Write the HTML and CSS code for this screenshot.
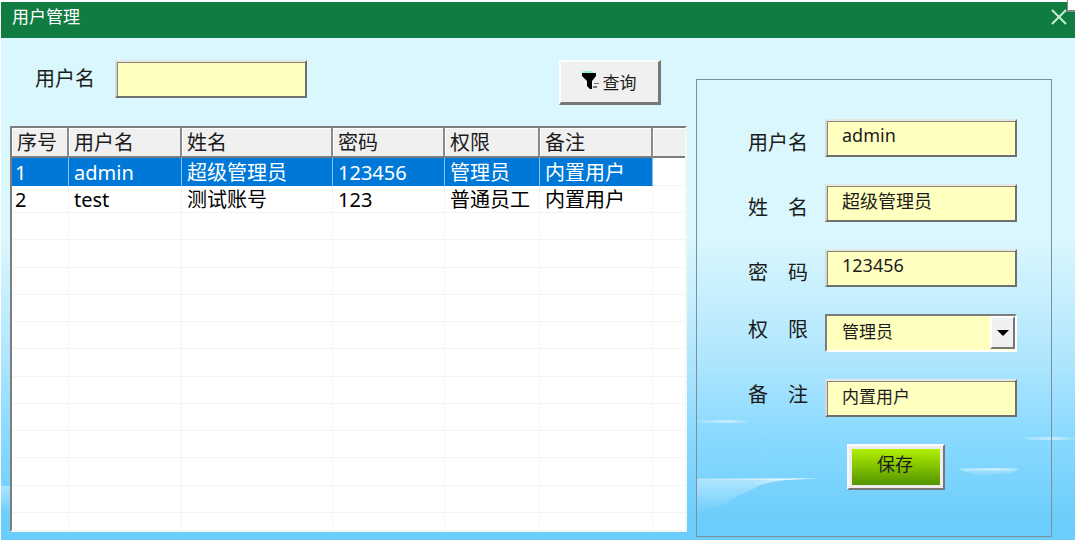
FILE: index.html
```html
<!DOCTYPE html>
<html lang="zh-CN">
<head>
    <meta charset="UTF-8">
    <meta name="viewport" content="width=device-width, initial-scale=1.0">
    <title>用户管理</title>
    <link rel="stylesheet" href="styles.css">
</head>
<body>

<div class="window">
    <svg class="clouds" viewBox="0 0 1074 500" preserveAspectRatio="none" aria-hidden="true">
        <defs>
            <linearGradient id="bank" x1="0" y1="0" x2="0" y2="1">
                <stop offset="0" stop-color="#fff" stop-opacity="0.4"/>
                <stop offset="1" stop-color="#fff" stop-opacity="0"/>
            </linearGradient>
            <linearGradient id="streak" x1="0" y1="0" x2="1" y2="0">
                <stop offset="0" stop-color="#fff" stop-opacity="0.1"/>
                <stop offset="0.6" stop-color="#fff" stop-opacity="0.5"/>
                <stop offset="1" stop-color="#fff" stop-opacity="0.1"/>
            </linearGradient>
        </defs>
        <path fill="url(#streak)" d="M696 380h51l-3 3h-48z"/>
        <path fill="url(#bank)" d="M0 446h10v26H0z"/>
        <path fill="url(#bank)" d="M696 439h98q-32 3-40 9l-8 4-8 3-14 9-28 8z"/>
        <path fill="url(#streak)" d="M756 445c16-5 36-6 70-7-30 0-50 0-74 4z"/>
        <path fill="url(#streak)" d="M696 438h130l-30 2H696z"/>
        <path fill="url(#bank)" d="M957 429h60l-6 4-14 1-12 2-10-1z"/>
        <path fill="url(#streak)" d="M957 428h61l-2 2h-54z"/>
        <path fill="url(#streak)" d="M1020 397h54v3h-46z"/>
    </svg>

    <header class="titlebar">
        <h1>用户管理</h1>
        <button type="button" class="close" aria-label="关闭">
            <svg viewBox="0 0 16 16"><path d="M1 1l14 14M15 1L1 15"/></svg>
        </button>
    </header>

    <main>
        <section class="users">
            <form class="search">
                <label for="keyword">用户名</label>
                <input type="text" id="keyword" class="box">
                <button type="button" class="query">
                    <svg viewBox="0 0 20 20" aria-hidden="true">
                        <path fill="#8ff0e0" d="M0 1l4-1h7l2 2H2z"/>
                        <path d="M1 2h14v3l-4 5v8H9l-3-3v-5L1 5z"/>
                        <path fill="#777" d="M13 12h5v1h-5zM12 15h4v2h-4z"/>
                    </svg>
                    查询
                </button>
            </form>

            <div class="list">
                <table>
                    <thead>
                        <tr>
                            <th>序号</th>
                            <th>用户名</th>
                            <th>姓名</th>
                            <th>密码</th>
                            <th>权限</th>
                            <th>备注</th>
                            <th></th>
                        </tr>
                    </thead>
                    <tbody>
                        <tr class="selected"><td>1</td><td>admin</td><td>超级管理员</td><td>123456</td><td>管理员</td><td>内置用户</td><td></td></tr>
                        <tr><td>2</td><td>test</td><td>测试账号</td><td>123</td><td>普通员工</td><td>内置用户</td><td></td></tr>
                        <tr><td></td><td></td><td></td><td></td><td></td><td></td><td></td></tr>
                        <tr><td></td><td></td><td></td><td></td><td></td><td></td><td></td></tr>
                        <tr><td></td><td></td><td></td><td></td><td></td><td></td><td></td></tr>
                        <tr><td></td><td></td><td></td><td></td><td></td><td></td><td></td></tr>
                        <tr><td></td><td></td><td></td><td></td><td></td><td></td><td></td></tr>
                        <tr><td></td><td></td><td></td><td></td><td></td><td></td><td></td></tr>
                        <tr><td></td><td></td><td></td><td></td><td></td><td></td><td></td></tr>
                        <tr><td></td><td></td><td></td><td></td><td></td><td></td><td></td></tr>
                        <tr><td></td><td></td><td></td><td></td><td></td><td></td><td></td></tr>
                        <tr><td></td><td></td><td></td><td></td><td></td><td></td><td></td></tr>
                        <tr><td></td><td></td><td></td><td></td><td></td><td></td><td></td></tr>
                        <tr class="last"><td></td><td></td><td></td><td></td><td></td><td></td><td></td></tr>
                    </tbody>
                </table>
            </div>
        </section>

        <form class="editor">
            <div class="field">
                <label for="username">用户名</label>
                <input type="text" id="username" class="box" value="admin">
            </div>
            <div class="field">
                <label for="fullname">姓名</label>
                <input type="text" id="fullname" class="box" value="超级管理员">
            </div>
            <div class="field">
                <label for="password">密码</label>
                <input type="text" id="password" class="box" value="123456">
            </div>
            <div class="field raised">
                <label for="role">权限</label>
                <div class="combo">
                    <select id="role">
                        <option>管理员</option>
                        <option>普通员工</option>
                    </select>
                    <span class="arrow"></span>
                </div>
            </div>
            <div class="field raised">
                <label for="remark">备注</label>
                <input type="text" id="remark" class="box small" value="内置用户">
            </div>
            <button type="button" class="save">保存</button>
        </form>
    </main>
</div>
<div class="corner"></div>

</body>
</html>
```

FILE: styles.css
```css
* {
    box-sizing: border-box;
}

body {
    margin: 0;
    background: #fff;
    color: #1c1c1c;
    font-family: "Noto Sans", "Noto Sans CJK SC", sans-serif;
    font-size: 20px;
    line-height: 28px;
}

input, select, button {
    font-family: inherit;
    color: inherit;
    border-radius: 0;
    margin: 0;
}

.window {
    position: relative;
    display: flex;
    flex-direction: column;
    min-height: calc(100vh - 2px);
    margin: 2px 0 0 1px;
    background: linear-gradient(#daf7fd 0, #daf7fd 44%, #b0e6fe 66%, #8bdaff 80%, #6bcdfb 97%);
}

.clouds {
    position: absolute;
    left: 0;
    bottom: 0;
    width: 100%;
    height: 500px;
}

/* title bar */
.titlebar {
    position: relative;
    display: flex;
    align-items: center;
    justify-content: space-between;
    height: 36px;
    padding: 0 8px 6px 11px;
    background: #107c41;
    color: #fff;
}

.titlebar h1 {
    margin: 0;
    font-size: 17px;
    font-weight: 400;
}

.close {
    display: flex;
    padding: 0;
    border: none;
    background: none;
}

.close svg {
    width: 16px;
    height: 16px;
    fill: none;
    stroke: #c9eed6;
    stroke-width: 2;
}

.corner {
    position: absolute;
    top: 0;
    right: 0;
    width: 8px;
    height: 12px;
    background: #fff;
    border: solid #888;
    border-width: 0 0 2px 1px;
}

main {
    position: relative;
    flex: 1;
    display: grid;
    grid-template-columns: 1fr 356px;
    gap: 9px;
    padding: 22px 23px 3px 9px;
}

.users {
    display: flex;
    flex-direction: column;
    padding-bottom: 5px;
}

/* search row */
.search {
    display: flex;
    align-items: flex-start;
    height: 66px;
    padding: 0 26px 0 25px;
}

.search label {
    margin: 5px 20px 0 0;
}

.box {
    width: 192px;
    height: 38px;
    padding: 0 15px 6px;
    border: 2px solid;
    border-color: #e3e9e2 #6f6f6f #6f6f6f #d5d8d2;
    box-shadow: inset 1px 1px #8c8378;
    background: #ffffc0;
    font-size: 18px;
    outline: none;
}

.query {
    display: flex;
    align-items: center;
    justify-content: center;
    gap: 2px;
    width: 102px;
    height: 45px;
    margin-left: auto;
    padding: 0 2px 2px 0;
    border: solid;
    border-width: 2px 3px 3px 2px;
    border-color: #fdfdfd #777 #777 #fdfdfd;
    background: #f0f0f0;
    font-size: 17px;
}

.query svg {
    width: 20px;
    height: 20px;
}

/* user list */
.list {
    flex: 1;
    overflow: hidden;
    border: 2px solid;
    border-color: #7d7d7d #f4f8f2 #f4f8f2 #7d7d7d;
    background: #fff;
}

.list table {
    width: 100%;
    table-layout: fixed;
    border-collapse: separate;
    border-spacing: 0;
}

.list th {
    height: 30px;
    padding: 2px 0 0 5px;
    border-right: 2px solid #8a8a8a;
    border-bottom: 2px solid #7d7d7d;
    box-shadow: inset 1px 1px #fff;
    background: #f0f0f0;
    font-weight: 400;
    line-height: 26px;
    text-align: left;
    white-space: nowrap;
}

.list th:nth-child(1) { width: 57px; }
.list th:nth-child(2) { width: 113px; }
.list th:nth-child(3) { width: 151px; }
.list th:nth-child(4) { width: 112px; }
.list th:nth-child(5) { width: 95px; }
.list th:nth-child(6) { width: 113px; }

.list th:last-child {
    border-right: none;
}

.list td {
    height: 27px;
    padding: 2px 0 0 5px;
    border-right: 1px solid #f4f4f4;
    border-bottom: 1px solid #f4f4f4;
    color: #000;
    line-height: 24px;
    white-space: nowrap;
}

.list tr:nth-child(4n) td {
    height: 28px;
}

.list td:first-child {
    padding-left: 3px;
}

.list td:last-child {
    border-right: none;
}

.list .selected td {
    height: 28px;
    color: #fff;
}

.list .selected td:not(:last-child) {
    background: #0078d7;
    border-right-color: #8cc4f0;
    border-bottom-color: #0078d7;
}

.list .last td {
    height: 16px;
    border-bottom: none;
}

/* edit panel */
.editor {
    display: flex;
    flex-direction: column;
    gap: 27px;
    margin-top: 19px;
    padding: 39px 34px 0 51px;
    border: 1px solid #7f8f98;
}

.field {
    display: flex;
    justify-content: space-between;
    align-items: flex-end;
}

.field.raised {
    align-items: flex-start;
}

.field label {
    width: 60px;
    text-align-last: justify;
}

.field.raised label {
    padding-top: 2px;
}

.box.small {
    font-size: 17px;
}

.combo {
    position: relative;
    width: 192px;
    height: 38px;
    padding-right: 2px;
    border: 2px solid;
    border-color: #7d7d7d #fff #fff #7d7d7d;
    background: #ffffc0;
}

.combo select {
    width: 100%;
    height: 100%;
    padding: 0 15px 3px;
    border: none;
    background: transparent;
    font-size: 17px;
    appearance: none;
    outline: none;
}

.arrow {
    position: absolute;
    top: 0;
    right: 0;
    display: flex;
    align-items: center;
    justify-content: center;
    width: 25px;
    height: 33px;
    border: 2px solid;
    border-color: #fff #777 #777 #fff;
    background: #f0f0f0;
    pointer-events: none;
}

.arrow::before {
    content: "";
    border: solid transparent;
    border-width: 6px 6px 0;
    border-top-color: #000;
}

.save {
    width: 98px;
    height: 46px;
    margin-left: 99px;
    padding: 0 2px 8px 0;
    border: 2px solid;
    border-color: #fafafa #777 #777 #fafafa;
    box-shadow: inset 0 0 0 3px #eee;
    background: linear-gradient(#b8f800, #4c8c00);
    font-size: 18px;
}
```
